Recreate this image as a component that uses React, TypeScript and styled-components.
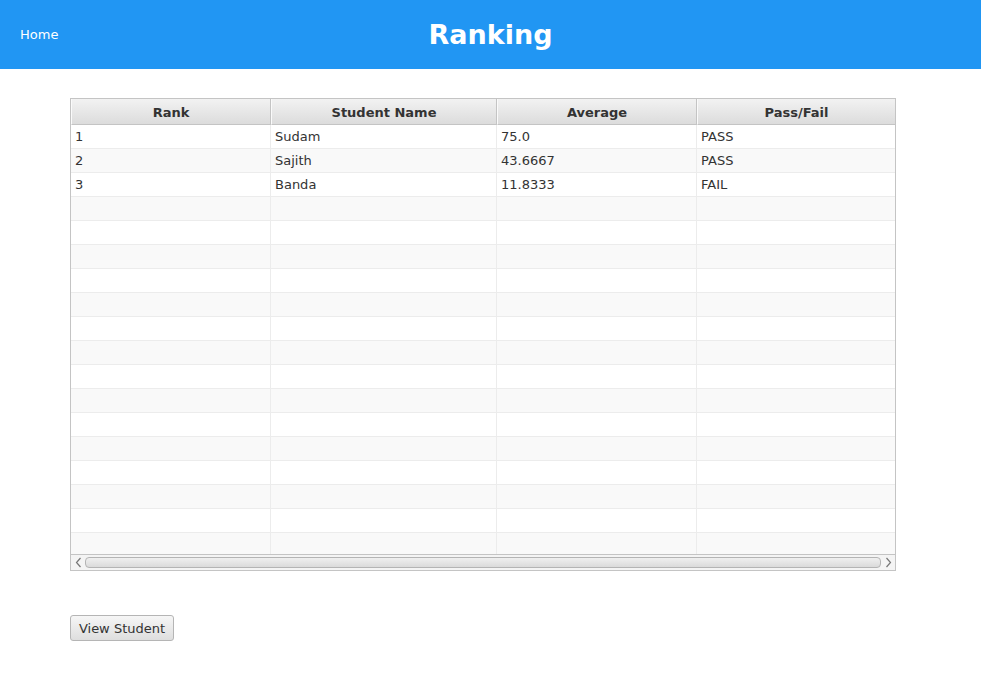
import React from "react";
import styled, { createGlobalStyle } from "styled-components";

const Global = createGlobalStyle`
  html, body { margin: 0; padding: 0; background: #fff; }
  body { font-family: "DejaVu Sans", "Liberation Sans", sans-serif; color: #333; }
  * { box-sizing: border-box; }
`;

const Header = styled.header`
  height: 69px;
  background: #2196f3;
  display: grid;
  grid-template-columns: 1fr auto 1fr;
  align-items: center;
  padding: 0 20px;
`;

const HomeLink = styled.span`
  color: #fff;
  font-size: 13px;
  justify-self: start;
`;

const Title = styled.h1`
  margin: 0;
  color: #fff;
  font-size: 27px;
  font-weight: bold;
`;

const Main = styled.main`
  padding: 29px 0 0 70px;
  display: flex;
  flex-direction: column;
  align-items: flex-start;
`;

const Table = styled.div`
  width: 826px;
  height: 473px;
  border: 1px solid #c4c4c4;
  display: flex;
  flex-direction: column;
  overflow: hidden;
`;

const cols = "200px 226px 200px 198px";

const HeadRow = styled.div`
  display: grid;
  grid-template-columns: ${cols};
  height: 26px;
  flex: none;
`;

const HeadCell = styled.div`
  background: linear-gradient(#f2f2f2, #dcdcdc);
  border-right: 1px solid #c4c4c4;
  border-bottom: 1px solid #c4c4c4;
  border-left: 1px solid #fafafa;
  display: flex;
  align-items: center;
  justify-content: center;
  padding-top: 2px;
  font-size: 13px;
  font-weight: bold;
  color: #333;
  &:last-child { border-right: none; }
`;

const Body = styled.div`
  flex: 1;
  overflow: hidden;
`;

const Row = styled.div<{ $odd: boolean }>`
  display: grid;
  grid-template-columns: ${cols};
  height: 24px;
  background: ${(p) => (p.$odd ? "#f9f9f9" : "#ffffff")};
  border-bottom: 1px solid #ececec;
`;

const Cell = styled.div`
  border-right: 1px solid #ececec;
  padding-left: 4px;
  display: flex;
  align-items: center;
  font-size: 13px;
  color: #333;
  &:last-child { border-right: none; }
`;

const ScrollBar = styled.div`
  flex: none;
  height: 16px;
  border-top: 1px solid #c4c4c4;
  background: #f4f4f4;
  display: flex;
  align-items: center;
`;

const Arrow = styled.div`
  width: 14px;
  height: 15px;
  display: flex;
  align-items: center;
  justify-content: center;
  flex: none;
`;

const Thumb = styled.div`
  flex: 1;
  height: 11px;
  border: 1px solid #b4b4b4;
  border-radius: 4px;
  background: linear-gradient(#f0f0f0, #dadada);
`;

const Button = styled.button`
  margin-top: 44px;
  height: 26px;
  width: 104px;
  padding: 0;
  font-family: "DejaVu Sans", "Liberation Sans", sans-serif;
  font-size: 13px;
  color: #333;
  border: 1px solid #b5b5b5;
  border-radius: 3px;
  background: linear-gradient(#f6f6f6, #dedede);
`;

const data: [string, string, string, string][] = [
  ["1", "Sudam", "75.0", "PASS"],
  ["2", "Sajith", "43.6667", "PASS"],
  ["3", "Banda", "11.8333", "FAIL"],
];

const rows = Array.from({ length: 18 }, (_, i) => data[i] ?? ["", "", "", ""]);

const ArrowIcon = ({ dir }: { dir: "l" | "r" }) => (
  <svg width="7" height="11" viewBox="0 0 7 11">
    <path
      d={dir === "l" ? "M5.5 1 L1.5 5.5 L5.5 10" : "M1.5 1 L5.5 5.5 L1.5 10"}
      fill="none"
      stroke="#777"
      strokeWidth="1.2"
    />
  </svg>
);

export default function App() {
  return (
    <>
      <Global />
      <Header>
        <HomeLink>Home</HomeLink>
        <Title>Ranking</Title>
        <span />
      </Header>
      <Main>
        <Table>
          <HeadRow>
            <HeadCell>Rank</HeadCell>
            <HeadCell>Student Name</HeadCell>
            <HeadCell>Average</HeadCell>
            <HeadCell>Pass/Fail</HeadCell>
          </HeadRow>
          <Body>
            {rows.map((r, i) => (
              <Row key={i} $odd={i % 2 === 1}>
                {r.map((c, j) => (
                  <Cell key={j}>{c}</Cell>
                ))}
              </Row>
            ))}
          </Body>
          <ScrollBar>
            <Arrow>
              <ArrowIcon dir="l" />
            </Arrow>
            <Thumb />
            <Arrow>
              <ArrowIcon dir="r" />
            </Arrow>
          </ScrollBar>
        </Table>
        <Button>View Student</Button>
      </Main>
    </>
  );
}
